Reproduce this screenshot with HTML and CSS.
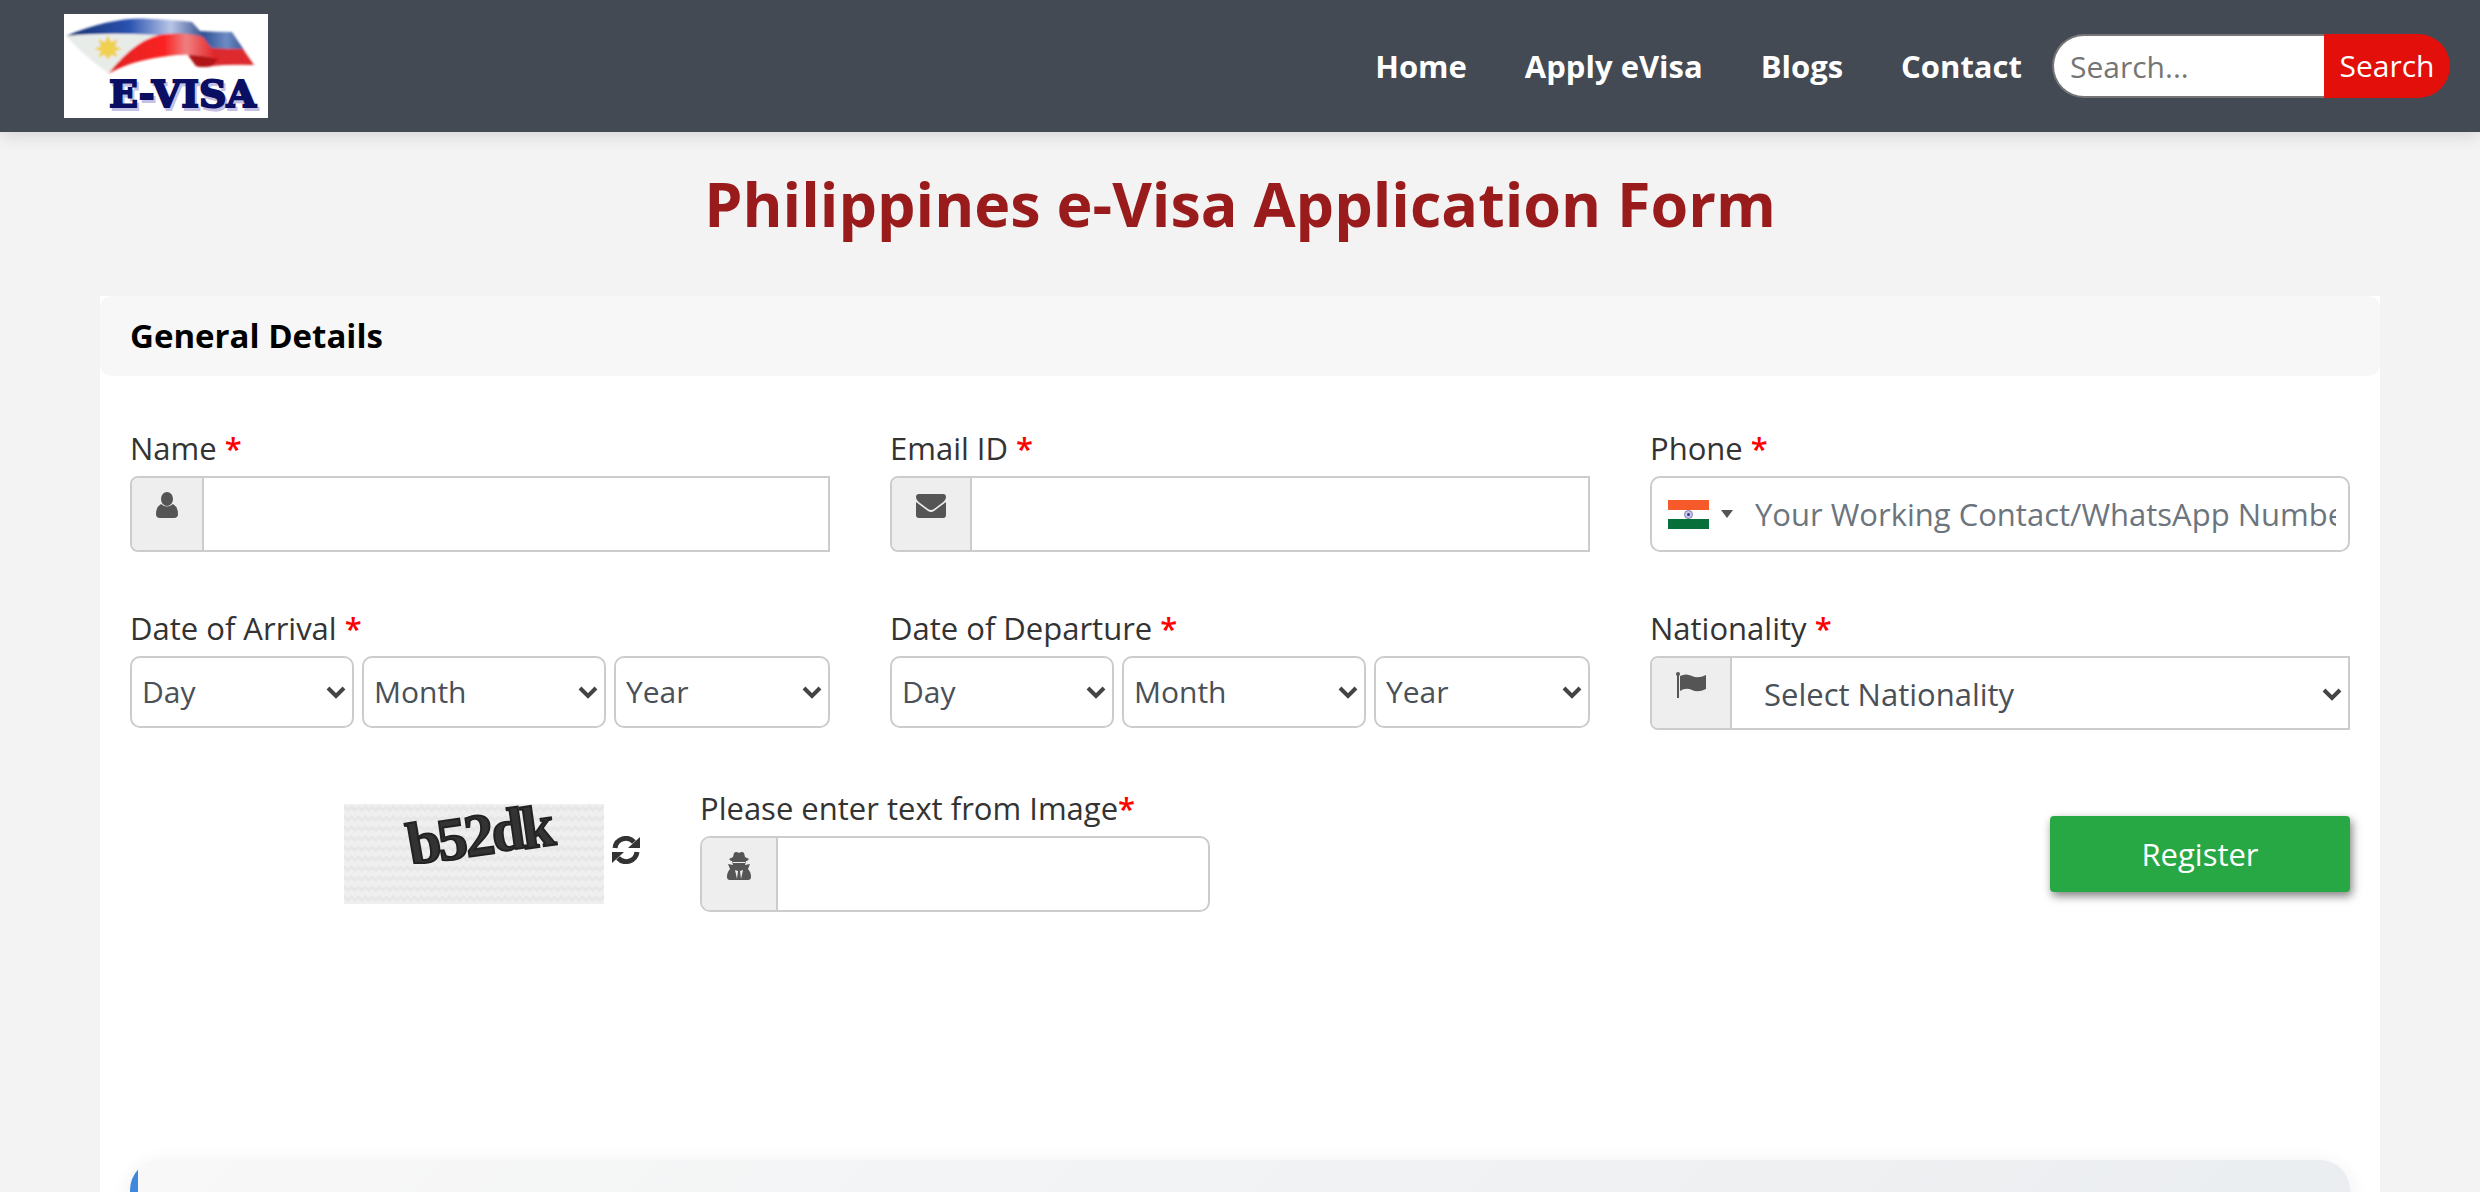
FILE: index.html
```html
<!DOCTYPE html>
<html lang="en">
<head>
<meta charset="utf-8">
<meta name="viewport" content="width=device-width, initial-scale=1">
<title>Philippines e-Visa Application Form</title>
<link rel="stylesheet" href="styles.css">
</head>
<body>
<header class="site-header">
  <a class="logo" href="#" aria-label="E-Visa home">
    <svg viewBox="0 0 204 104" width="204" height="104">
      <defs>
        <linearGradient id="blue" x1="0" x2="1"><stop offset="0" stop-color="#16306f"/><stop offset=".45" stop-color="#2a52b0"/><stop offset=".75" stop-color="#b9c6e6"/><stop offset="1" stop-color="#2c4686"/></linearGradient>
        <linearGradient id="red" x1="0" x2="1"><stop offset="0" stop-color="#e01f1f"/><stop offset=".5" stop-color="#fb2222"/><stop offset=".7" stop-color="#f08080"/><stop offset="1" stop-color="#e01418"/></linearGradient>
        <linearGradient id="tail" x1="0" x2="1"><stop offset="0" stop-color="#27498f"/><stop offset=".6" stop-color="#6d8cc4"/><stop offset="1" stop-color="#3a5796"/></linearGradient>
        <filter id="soft"><feGaussianBlur stdDeviation="1"/></filter>
      </defs>
      <rect width="204" height="104" fill="#fff"/>
      <g filter="url(#soft)">
        <path d="M136 17Q152 18 168 18L180 36L145 35Z" fill="url(#tail)"/>
        <path d="M146 34Q162 35 179 35L190 51Q165 50 148 52Q138 54 132 52L124 41Z" fill="#dc2a2e"/>
        <path d="M124 41L155 44L148 52Q138 54 132 52Z" fill="#b01218"/>
        <path d="M2 22Q20 20 100 20L44 59Q22 44 2 22Z" fill="#e8ece9"/>
        <path d="M2 22Q50 2 88 5Q110 6 128 8L137 18L142 28Q122 19 94 21Q40 18 2 22Z" fill="url(#blue)"/>
        <path d="M44 60Q74 22 102 20Q124 18 139 23L156 46Q130 38 104 42Q68 46 44 60Z" fill="url(#red)"/>
        <path d="M44 21l3 7 7-3-3 7 7 3-7 2 3 6-7-2-3 5-3-5-7 2 3-6-7-2 7-3-3-7 7 3Z" fill="#f0d050"/>
      </g>
      <text class="logo-shade" x="47" y="96">E-VISA</text>
      <text class="logo-text" x="45" y="93">E-VISA</text>
    </svg>
  </a>
  <nav class="nav">
    <a href="#">Home</a>
    <a href="#">Apply eVisa</a>
    <a href="#">Blogs</a>
    <a href="#">Contact</a>
  </nav>
  <form class="search">
    <input type="search" placeholder="Search..." aria-label="Search">
    <button type="button">Search</button>
  </form>
</header>

<main class="page">
  <h1>Philippines e-Visa Application Form</h1>
  <section class="card">
    <h2>General Details</h2>
    <form class="card-body">
      <div class="grid thirds">
        <div class="field">
          <label for="name">Name <b>*</b></label>
          <div class="group">
            <span class="addon addon-name"><svg viewBox="0 0 22 26" width="22" height="26"><ellipse cx="11" cy="7" rx="6" ry="7"/><path d="M5 12Q11 17 17 12Q22 15 22 22Q22 26 18 26H4Q0 26 0 22Q0 15 5 12Z"/></svg></span>
            <input id="name" type="text">
          </div>
        </div>
        <div class="field">
          <label for="email">Email ID <b>*</b></label>
          <div class="group">
            <span class="addon addon-wide"><svg viewBox="0 -2 30 26" width="30" height="26"><path d="M3 0H27Q30 0 30 3Q30 6 26 9L18 15Q15 17 12 15L4 9Q0 6 0 3Q0 0 3 0Z"/><path d="M0 8L12 17Q15 19 18 17L30 8V21Q30 24 27 24H3Q0 24 0 21Z"/></svg></span>
            <input id="email" type="email">
          </div>
        </div>
        <div class="field">
          <label for="phone">Phone <b>*</b></label>
          <div class="group phone">
            <button class="country" type="button" aria-label="Country: India">
              <svg viewBox="0 0 41 29" width="41" height="29"><rect width="41" height="29" fill="#fff"/><rect width="41" height="10" fill="#f6592a"/><rect y="19" width="41" height="10" fill="#07703a"/><circle cx="20.500" cy="14.500" r="4" fill="#c9c9ea" stroke="#7c7cb8"/><circle cx="20.500" cy="14.500" r="1.500" fill="#333a80"/></svg>
              <svg viewBox="0 0 12 8" width="12" height="8"><path d="M0 0H12L6 8Z" fill="#555"/></svg>
            </button>
            <input id="phone" type="tel" placeholder="Your Working Contact/WhatsApp Number">
          </div>
        </div>
        <div class="field">
          <label for="arr-day">Date of Arrival <b>*</b></label>
          <div class="dates">
            <select id="arr-day"><option>Day</option></select>
            <select aria-label="Arrival month"><option>Month</option></select>
            <select aria-label="Arrival year"><option>Year</option></select>
          </div>
        </div>
        <div class="field">
          <label for="dep-day">Date of Departure <b>*</b></label>
          <div class="dates">
            <select id="dep-day"><option>Day</option></select>
            <select aria-label="Departure month"><option>Month</option></select>
            <select aria-label="Departure year"><option>Year</option></select>
          </div>
        </div>
        <div class="field">
          <label for="nation">Nationality <b>*</b></label>
          <div class="group nation">
            <span class="addon addon-wide"><svg viewBox="0 0 30 26" width="30" height="26"><circle cx="2" cy="2" r="2"/><path d="M1 2H3V26H1ZM4 4Q10 1 16 4Q22 7 30 3V17Q22 21 16 18Q10 15 4 19Z"/></svg></span>
            <select id="nation"><option>Select Nationality</option></select>
          </div>
        </div>
      </div>

      <div class="grid quarters">
        <div class="captcha">
          <svg viewBox="0 0 260 100" width="260" height="100" role="img" aria-label="Captcha">
            <defs>
              <pattern id="weave" width="14" height="10" patternUnits="userSpaceOnUse"><rect width="14" height="10" fill="#efefef"/><path d="M0 3L4 6L7 3L11 6L14 3" fill="none" stroke="#e7e7e7" stroke-width="3"/></pattern>
            </defs>
            <rect width="260" height="100" fill="url(#weave)"/>
            <g class="captcha-text">
              <text transform="translate(67 61) rotate(-10)">b</text>
              <text transform="translate(96 57) rotate(-8)">5</text>
              <text transform="translate(123 53) rotate(-8)">2</text>
              <text transform="translate(150 48) rotate(-8)">d</text>
              <text transform="translate(180 45) rotate(-8)">k</text>
            </g>
          </svg>
          <button class="refresh" type="button" aria-label="Refresh image">
            <svg viewBox="0 0 28 28" width="28" height="28"><path d="M3 12A11 11 0 0 1 22 6M25 16A11 11 0 0 1 6 22" fill="none" stroke="#333" stroke-width="5"/><path d="M28 1V12H16ZM0 27V16H12Z" fill="#333"/></svg>
          </button>
        </div>
        <div class="field">
          <label for="code">Please enter text from Image<i>*</i></label>
          <div class="group rounded">
            <span class="addon addon-code"><svg viewBox="0 0 24 28" width="24" height="28"><path d="M7 1Q9-1 12 1Q15-1 17 1L18 5L22 7L20 9H4L2 7L6 5Z"/><path d="M5 9H19L18 13L23 12L21 17Q24 20 24 25Q24 28 21 28H3Q0 28 0 25Q0 20 3 17L1 12L6 13Z"/><path d="M6 10H18V11H6ZM8 18L11 19L10 27ZM16 18L13 19L14 27Z" fill="#eee"/></svg></span>
            <input id="code" type="text">
          </div>
        </div>
        <button class="register" type="button">Register</button>
      </div>

      <div class="notice"></div>
    </form>
  </section>
</main>
</body>
</html>
```

FILE: styles.css
```css
* { box-sizing: border-box; }

html {
  background: #f3f3f3;
  scrollbar-width: none;
}

body {
  margin: 0;
  font-family: "Open Sans", "Noto Sans", sans-serif;
  font-size: 31px;
  line-height: 48px;
  color: #333;
}

input, select, button {
  font: inherit;
  color: inherit;
  margin: 0;
}

.site-header {
  display: flex;
  align-items: center;
  height: 132px;
  padding: 0 30px 0 64px;
  background: #434a54;
  box-shadow: 0 4px 16px rgba(0, 0, 0, .12);
}

.logo, .logo svg { display: block; }

.logo-text, .logo-shade {
  font: bold 38px "DejaVu Serif", serif;
  fill: #0b0f63;
  stroke: #0b0f63;
  stroke-width: 2px;
}
.logo-shade { fill: #c4c0e4; stroke: #c4c0e4; }

.nav {
  display: flex;
  gap: 58px;
  margin: 0 30px 0 auto;
  font-weight: 700;
}

.nav a {
  color: #fff;
  text-decoration: none;
}

.search {
  display: flex;
  font-size: 30px;
}

.search input {
  width: 272px;
  height: 64px;
  padding: 0 16px;
  border: 2px solid #767676;
  border-right: 0;
  border-radius: 32px 0 0 32px;
  background: #fff;
  -webkit-appearance: none;
  appearance: none;
}

::placeholder { color: #757575; opacity: 1; }

.search button {
  width: 126px;
  height: 64px;
  padding: 0;
  border: 0;
  border-radius: 0 32px 32px 0;
  background: #e20f0b;
  color: #fff;
}

.page { padding: 28px 100px 0; }

h1 {
  margin: 0 0 48px;
  font-size: 61px;
  line-height: 88px;
  font-weight: 700;
  text-align: center;
  color: #991b1b;
}

.card { background: #fff; }

h2 {
  margin: 0;
  padding: 0 30px;
  border-radius: 12px;
  background: #f7f7f7;
  color: #000;
  font-size: 33px;
  line-height: 80px;
}

.card-body { padding: 48px 30px; }

.grid {
  display: grid;
  column-gap: 60px;
}
.thirds { grid-template-columns: repeat(3, 1fr); }
.quarters { grid-template-columns: repeat(4, 1fr); }

.field { height: 180px; min-width: 0; }

label {
  display: block;
  height: 52px;
  font-weight: 500;
}
label b, label i {
  color: #f00;
  font-style: normal;
  font-weight: 600;
}

.group {
  display: flex;
  height: 76px;
  border: 2px solid #ccc;
  border-radius: 8px 0 0 8px;
  background: #fff;
  overflow: hidden;
}
.group input, .group select {
  flex: 1;
  min-width: 0;
  border: 0;
  background-color: transparent;
}
.group.rounded, .group.phone { border-radius: 10px; }
.group.nation { height: 74px; }

.addon {
  display: flex;
  justify-content: center;
  padding-top: 14px;
  border-right: 2px solid #ccc;
  background: #eee;
  fill: #555;
}
.addon-name { width: 72px; }
.addon-wide { width: 80px; }
.addon-code { width: 76px; }

.country {
  display: flex;
  align-items: center;
  gap: 12px;
  padding: 0 16px;
  border: 0;
  background: none;
}
.phone input { padding: 0 12px 0 6px; }
.phone ::placeholder { color: #6c757d; }

.dates {
  display: grid;
  grid-template-columns: 224fr 244fr 216fr;
  gap: 8px;
  font-size: 30px;
}

select {
  -webkit-appearance: none;
  appearance: none;
  width: 100%;
  height: 72px;
  padding: 0 40px 0 10px;
  border: 2px solid #ccc;
  border-radius: 10px;
  color: #495057;
  background: #fff url("data:image/svg+xml,%3Csvg xmlns='http://www.w3.org/2000/svg' viewBox='0 0 20 14'%3E%3Cpath d='M2 3L10 11L18 3' fill='none' stroke='%23444' stroke-width='4'/%3E%3C/svg%3E") no-repeat right 6px center / 20px 14px;
}
.nation select { padding-left: 32px; border-radius: 0; }

.captcha {
  display: flex;
  justify-content: flex-end;
  align-items: center;
  gap: 8px;
  height: 100px;
  margin-top: 20px;
}
.captcha-text {
  font: bold 60px "Liberation Serif", serif;
  fill: #333;
  stroke: #222;
  stroke-width: 2px;
}

.refresh {
  display: flex;
  padding: 0 0 8px;
  border: 0;
  background: none;
}

.register {
  grid-column: 3 / 5;
  justify-self: end;
  width: 300px;
  height: 76px;
  margin-top: 32px;
  border: 0;
  border-radius: 4px;
  background: #28a745;
  color: #fff;
  box-shadow: 2px 4px 10px rgba(0, 0, 0, .5);
}

.notice {
  height: 300px;
  margin-top: 196px;
  border-radius: 30px;
  background:
    linear-gradient(#3f87dc, #3f87dc) no-repeat left / 8px 100%,
    linear-gradient(135deg, #f8f8f8, #e9ecef);
  box-shadow: 0 4px 20px rgba(0, 0, 0, .08);
}
```
